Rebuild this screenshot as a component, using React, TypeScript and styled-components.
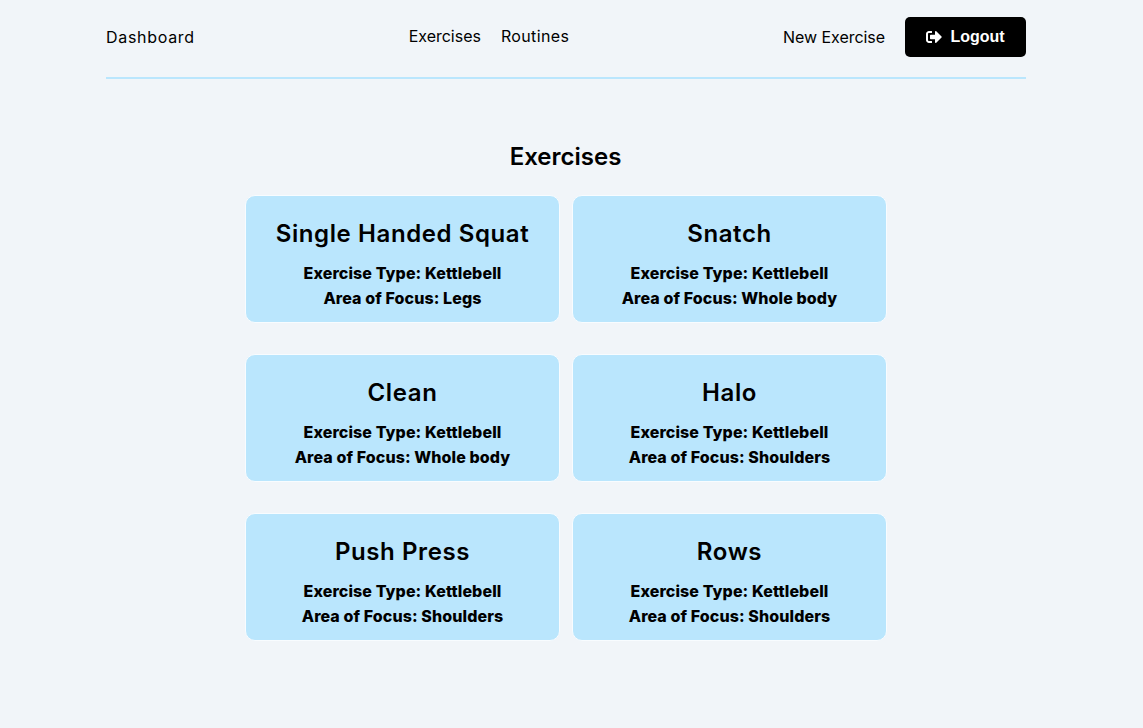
import React, { FC } from "react";
import styled, { createGlobalStyle } from "styled-components";
import { FaSignOutAlt } from "react-icons/fa";

const exercises = [
    { name: "Single Handed Squat", type: "Kettlebell", focus: "Legs" },
    { name: "Snatch", type: "Kettlebell", focus: "Whole body" },
    { name: "Clean", type: "Kettlebell", focus: "Whole body" },
    { name: "Halo", type: "Kettlebell", focus: "Shoulders" },
    { name: "Push Press", type: "Kettlebell", focus: "Shoulders" },
    { name: "Rows", type: "Kettlebell", focus: "Shoulders" },
];

const App: FC = () => {
    return (
        <>
            <GlobalStyle />
            <Page>
                <Header>
                    <NavGroup>
                        <DashboardLink>Dashboard</DashboardLink>
                    </NavGroup>
                    <CenterNav>
                        <NavLink>Exercises</NavLink>
                        <NavLink $spacing={0.35}>Routines</NavLink>
                    </CenterNav>
                    <NavGroup>
                        <NavLink $spacing={-0.05}>New Exercise</NavLink>
                        <LogoutButton>
                            <FaSignOutAlt size={16} />
                            Logout
                        </LogoutButton>
                    </NavGroup>
                </Header>
                <Main>
                    <Heading>Exercises</Heading>
                    <CardGrid>
                        {exercises.map((exercise) => (
                            <Card key={exercise.name}>
                                <CardTitle>{exercise.name}</CardTitle>
                                <CardLine>Exercise Type: {exercise.type}</CardLine>
                                <CardLine>Area of Focus: {exercise.focus}</CardLine>
                            </Card>
                        ))}
                    </CardGrid>
                </Main>
            </Page>
        </>
    );
};

export default App;

const GlobalStyle = createGlobalStyle`
    html, body {
        margin: 0;
        padding: 0;
        background: #f1f5f9;
    }

    body {
        font-family: "Inter", "Liberation Sans", sans-serif;
        color: #000;
    }
`;

const Page = styled.div`
    box-sizing: border-box;
    width: 1132px;
    height: 728px;
    padding: 0 106px;
`;

const Header = styled.header`
    height: 79px;
    box-sizing: border-box;
    border-bottom: 2px solid #bae6fd;
    display: flex;
    justify-content: space-between;
    align-items: center;
    padding-bottom: 3px;
`;

const NavGroup = styled.div`
    display: flex;
    align-items: center;
    gap: 20px;
`;

const CenterNav = styled(NavGroup)`
    position: relative;
    top: -1px;
`;

const NavLink = styled.a<{ $spacing?: number }>`
    font-size: 16px;
    line-height: 24px;
    letter-spacing: ${(p) => p.$spacing ?? 0}px;
    color: #000;
`;

const DashboardLink = styled(NavLink)`
    letter-spacing: 0.7px;
`;

const LogoutButton = styled.button`
    width: 121px;
    height: 40px;
    display: flex;
    align-items: center;
    justify-content: center;
    gap: 8px;
    border: none;
    border-radius: 5px;
    background: #000;
    color: #fff;
    font-family: "Liberation Sans", Arial, sans-serif;
    font-size: 16px;
    font-weight: 700;
`;

const Main = styled.main`
    display: flex;
    flex-direction: column;
    align-items: center;
    padding-top: 61px;
`;

const Heading = styled.h1`
    margin: 0 1px 21px 0;
    font-size: 24px;
    line-height: 34px;
    font-weight: 600;
`;

const CardGrid = styled.section`
    display: grid;
    grid-template-columns: 315px 315px;
    column-gap: 12px;
    row-gap: 31px;
`;

const Card = styled.article`
    box-sizing: border-box;
    height: 128px;
    padding-top: 20px;
    border: 1px solid #f8fcff;
    border-radius: 10px;
    background: #bae6fd;
    text-align: center;
`;

const CardTitle = styled.h2`
    margin: 0 0 9px;
    font-size: 24px;
    line-height: 36px;
    font-weight: 600;
    letter-spacing: 0.6px;
`;

const CardLine = styled.p`
    margin: 0;
    font-size: 16px;
    line-height: 25px;
    font-weight: 800;
    letter-spacing: 0.1px;
`;
